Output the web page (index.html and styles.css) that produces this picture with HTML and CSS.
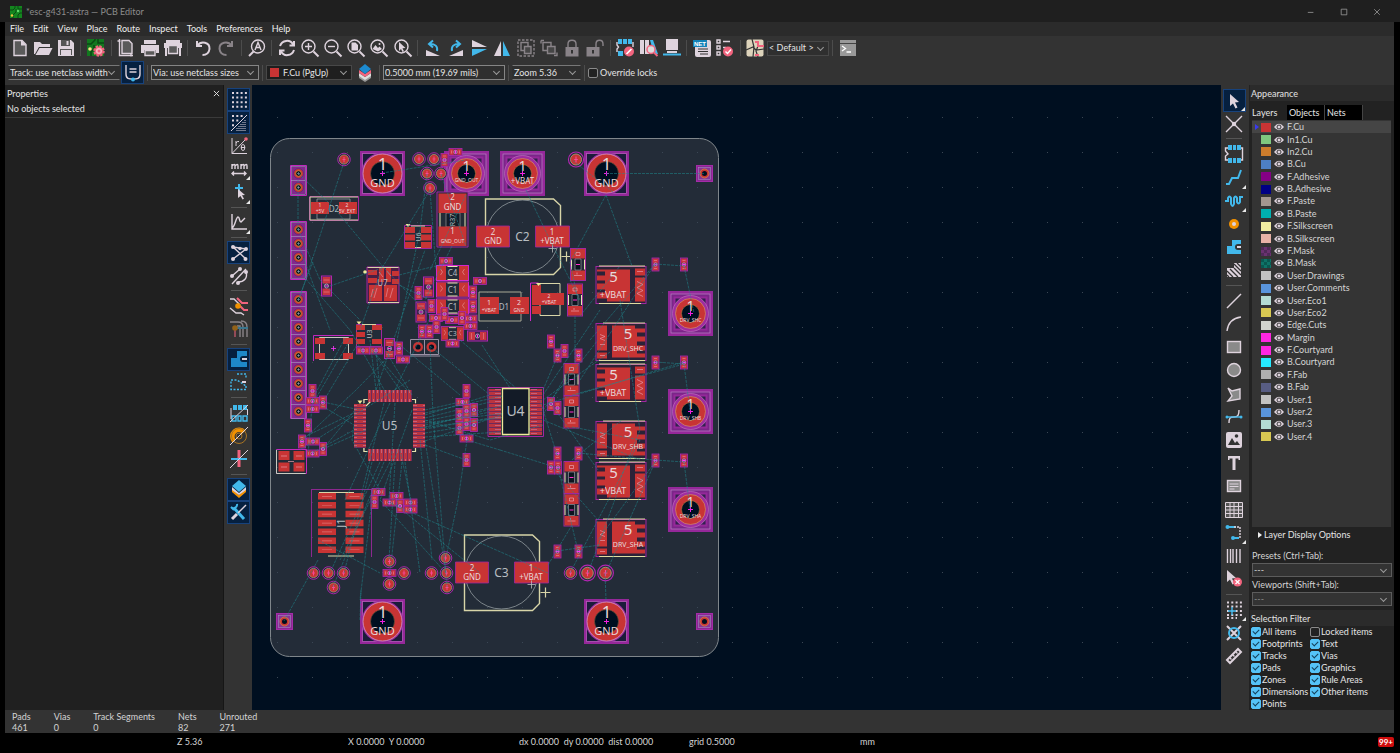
FILE: index.html
```html
<!DOCTYPE html>
<html lang="en">
<head>
<meta charset="utf-8">
<title>*esc-g431-astra — PCB Editor</title>
<link rel="stylesheet" href="styles.css">
</head>
<body>
<header class="titlebar">
  <svg class="app-icon" viewBox="0 0 12 12"><rect width="12" height="12" fill="#14861f"/><path d="M0 4h3l2-2V0M3 12V9l3-3V3M8 0v3h4M8 12V9l2-2h2" fill="none" stroke="#0b4a14"/><circle cx="2" cy="9.500" r="1.200" fill="#f5c542"/><circle cx="8" cy="5" r="1.200" fill="#5fd86a"/></svg>
  <h1>*esc-g431-astra — PCB Editor</h1>
  <div class="win-buttons">
    <button aria-label="Minimize"><svg viewBox="0 0 10 10"><path d="M1 5.500h7"/></svg></button>
    <button aria-label="Maximize"><svg viewBox="0 0 10 10"><path d="M1.500 1.500h7v7h-7z"/></svg></button>
    <button aria-label="Close"><svg viewBox="0 0 10 10"><path d="M1.500 1.500l7 7M8.500 1.500l-7 7"/></svg></button>
  </div>
</header>
<div class="frame">
<nav class="menubar">
  <button>File</button><button>Edit</button><button>View</button><button>Place</button><button>Route</button><button>Inspect</button><button>Tools</button><button>Preferences</button><button>Help</button>
</nav>

<div class="toolbar main-tools">
  <button aria-label="New board"><svg viewBox="0 0 20 20"><path class="fd sl" d="M4 2.500h8l4 4v11H4z"/><path class="fl" d="M11 2l5.500 5.500H11z"/></svg></button>
  <button aria-label="Open"><svg viewBox="0 0 20 20"><path class="fl" d="M1 4h6l2 2h8v3H6l-4 7H1z"/><path class="fl" d="M6.500 10H19.500l-3.500 7H2.500z"/></svg></button>
  <button aria-label="Save"><svg viewBox="0 0 20 20"><path class="fl" d="M2 2h13l3 3v13H2z"/><path d="M5 2h9v6H5zM4 11h12v6H4z" fill="#555"/><path class="fl" d="M10.500 3h2v4h-2zM5 12h10v5H5z"/></svg></button>
  <i class="sep"></i>
  <button aria-label="Board setup"><svg viewBox="0 0 20 20"><rect x="1" y="1" width="17" height="17" fill="#12781f"/><path d="M1 6h4l4-4V1M5 18v-4l3-3V7M12 1v4h6" fill="none" stroke="#0a4814" stroke-width="1.500"/><circle cx="4" cy="11" r="1.800" fill="#f7e08a"/><circle cx="13" cy="13" r="4" fill="none" stroke="#f2647e" stroke-width="3.500" stroke-dasharray="2 1.100"/><circle cx="13" cy="13" r="3.800" fill="#f8b6c2" stroke="#f2647e" stroke-width="1.500"/><circle cx="13" cy="13" r="1.500" fill="#f2647e"/></svg></button>
  <i class="sep"></i>
  <button aria-label="Page settings"><svg viewBox="0 0 20 20"><path class="fd sl" d="M6 2.500h7l3 3v10H6z"/><path class="sl" d="M3.500 1v16.500H17M1.500 3h3M15 16v2.500"/></svg></button>
  <button aria-label="Print"><svg viewBox="0 0 20 20"><path class="fl" d="M4 2h12v4H4zM1 7h18v8h-3v-3H4v3H1z"/><path class="fd sl" d="M5 12.500h10v5H5z"/></svg></button>
  <button aria-label="Plot"><svg viewBox="0 0 20 20"><path class="fl" d="M3 2h14v3H3zM1 5h18v5H1zM2 10h2v8H2zM16 10h2v8h-2z"/><path class="fd sl" d="M5.500 7.500h9v8h-9z"/></svg></button>
  <i class="sep"></i>
  <button aria-label="Undo"><svg viewBox="0 0 20 20"><path class="sl w2" d="M4 3v5h5M4.500 7.500C8 2.500 17 4 16.500 11c-.5 4-3.500 6-7 6"/></svg></button>
  <button class="dim" aria-label="Redo"><svg viewBox="0 0 20 20"><path class="sl w2" d="M16 3v5h-5M15.500 7.500C12 2.500 3 4 3.500 11c.5 4 3.500 6 7 6"/></svg></button>
  <i class="sep"></i>
  <button aria-label="Find"><svg viewBox="0 0 20 20"><circle class="sl" cx="11" cy="8.500" r="6.500"/><path class="sl w2" d="M6.500 13.500L2 18"/><path class="sl" d="M8 12l3-7.500L14 12M9 9.500h4"/></svg></button>
  <i class="sep"></i>
  <button aria-label="Refresh"><svg viewBox="0 0 20 20"><path class="sl w2" d="M3 8c2-6 10-7 13-1.500M17 3v4.500h-4.500M17 12c-2 6-10 7-13 1.500M3 17v-4.500h4.500"/></svg></button>
  <button aria-label="Zoom in"><svg viewBox="0 0 20 20"><circle class="sl" cx="8.500" cy="8.500" r="6.500"/><path class="sl w2" d="M13.500 13.500L18.500 18.500"/><path class="sl" d="M5 8.500h7M8.500 5v7"/></svg></button>
  <button aria-label="Zoom out"><svg viewBox="0 0 20 20"><circle class="sl" cx="8.500" cy="8.500" r="6.500"/><path class="sl w2" d="M13.500 13.500L18.500 18.500"/><path class="sl" d="M5 8.500h7"/></svg></button>
  <button aria-label="Zoom to page"><svg viewBox="0 0 20 20"><circle class="sl" cx="8.500" cy="8.500" r="6.500"/><path class="sl w2" d="M13.500 13.500L18.500 18.500"/><path class="fl" d="M5.500 4.500h4l2.500 2.500v5.500H5.500z"/></svg></button>
  <button aria-label="Zoom to objects"><svg viewBox="0 0 20 20"><circle class="sl" cx="8.500" cy="8.500" r="6.500"/><path class="sl w2" d="M13.500 13.500L18.500 18.500"/><path class="fl" d="M3.500 11l3-4 2.500 3 1.500-1.500 2.500 2.500-4 2.500z"/><circle class="fl" cx="10.500" cy="6" r="1"/></svg></button>
  <button aria-label="Zoom to selection"><svg viewBox="0 0 20 20"><circle class="sl" cx="8.500" cy="8.500" r="6.500"/><path class="sl w2" d="M13.500 13.500L18.500 18.500"/><path class="fl" d="M6 4l6.500 6-3 .3 1.500 3-1.500.7-1.500-3L6 13z"/></svg></button>
  <i class="sep"></i>
  <button aria-label="Rotate counterclockwise"><svg viewBox="0 0 20 20"><path class="fl" d="M3 12l14 6H3z"/><path class="sb w2" d="M14 13c1-5-2-7-7-7M10 2.500L6 6l4 3.500"/></svg></button>
  <button aria-label="Rotate clockwise"><svg viewBox="0 0 20 20"><path class="fl" d="M17 12v6H3z"/><path class="sb w2" d="M6 13c-1-5 2-7 7-7M10 2.500L14 6l-4 3.500"/></svg></button>
  <button aria-label="Flip vertically"><svg viewBox="0 0 20 20"><path class="fl" d="M3 2l15 7H3z"/><path class="fb" d="M3 11h15L3 18z"/></svg></button>
  <button aria-label="Mirror"><svg viewBox="0 0 20 20"><path class="fl" d="M9 3v15H2z"/><path class="fb" d="M11 3v15h7z"/></svg></button>
  <button class="dim" aria-label="Group"><svg viewBox="0 0 20 20"><path class="sl" stroke-dasharray="2.500 1.500" d="M2 2h16v16H2z"/><path class="sl" d="M5 4.500h7v8H5z"/><path class="fd sl" d="M8.500 8.500H15v7H8.500z"/></svg></button>
  <button class="dim" aria-label="Ungroup"><svg viewBox="0 0 20 20"><path class="sl" d="M4 4.500h8v8H4z"/><path class="fd sl" d="M8.500 8.500H16v7H8.500z"/><path class="sl" d="M2 2.500h3M2 2.500v3M15 17.500h3v-3"/></svg></button>
  <button class="dim" aria-label="Lock"><svg viewBox="0 0 20 20"><path class="fl" d="M3.500 9h13v9.500h-13z"/><path class="sl" d="M6 9V6c0-5 8-5 8 0v3"/><path d="M10 12v3.500" stroke="#333" stroke-width="2"/></svg></button>
  <button class="dim" aria-label="Unlock"><svg viewBox="0 0 20 20"><path class="fl" d="M1.500 9h13v9.500h-13z"/><path class="sl" d="M11 9V6c0-5 7-5 7 0v2"/><path d="M8 12v3.500" stroke="#333" stroke-width="2"/></svg></button>
  <i class="sep"></i>
  <button aria-label="Footprint editor"><svg viewBox="0 0 20 20"><path class="sl" d="M2 4v3l1.500 2L2 11v3M18 4v5"/><path class="fb" d="M3 1h4v5H3zM8 1h4v5H8zM13 1h4v5h-4zM3 13h5v5H3z"/><circle class="fr" cx="14" cy="13.500" r="5"/><path d="M11.500 16l5-5" stroke="#fff" stroke-width="1.700"/></svg></button>
  <button aria-label="Footprint browser"><svg viewBox="0 0 20 20"><path class="fl" d="M1 2h4v14H1zM6 2h4v14H6z"/><path class="fb" d="M11 2h3l5 14h-4z"/><circle cx="12" cy="11.500" r="4" fill="#ddd" stroke="#f2647e" stroke-width="1.500"/><path class="sr w2" d="M15 14.500l3.500 3.500"/></svg></button>
  <button aria-label="3D viewer"><svg viewBox="0 0 20 20"><path class="fl" d="M4 1h12v11H4zM5 13h10v2H5z"/><path class="fb" d="M1 15.500h18v2H1z"/></svg></button>
  <i class="sep"></i>
  <button aria-label="Update from schematic"><svg viewBox="0 0 20 20"><rect class="fl" x="3" y="2" width="16" height="17" rx="2"/><path d="M6 11h10M6 13.500h10M8 16h8" stroke="#333" stroke-width="1.200"/><rect x="1" y="2" width="14" height="7" fill="#1382b8"/><text x="2" y="8" class="net">NET</text></svg></button>
  <button aria-label="Design rules check"><svg viewBox="0 0 20 20"><path class="sl" d="M2 2h3v3H2zM2 8h3v3H2zM2 14h3v3H2zM8 3.500h7M8 9.500h3"/><circle class="fr" cx="13" cy="13.500" r="5"/><path d="M10.500 13.500l2 2 3.500-4" stroke="#fff" fill="none" stroke-width="1.400"/></svg></button>
  <i class="sep"></i>
  <button aria-label="Appearance preset"><svg viewBox="0 0 20 20"><rect x="1.500" y="1.500" width="17" height="17" rx="2" fill="#ddd3bb"/><path d="M1 12l7-3 3 3 8-1M7 1l2 8-1 10M13 8l-2 5 2 6" fill="none" stroke="#333" stroke-width="1.200"/><path class="sr w2" d="M10 4h3v4h6M10 17h4"/></svg></button>
  <span class="combo c-default"><select aria-label="Variant"><option>&lt; Default &gt;</option></select></span>
  <i class="sep"></i>
  <button aria-label="Scripting console"><svg viewBox="0 0 20 20"><rect x="2" y="2" width="16" height="16" fill="#999"/><path d="M2 5.500h16" stroke="#444"/><path d="M4 8l3.500 2.500L4 13M8.500 14H13" fill="none" stroke="#fff" stroke-width="1.300"/></svg></button>
</div>

<div class="toolbar options">
  <span class="combo c-track lined"><select aria-label="Track width"><option>Track: use netclass width</option></select></span>
  <button class="on" aria-label="Automatic width"><svg viewBox="0 0 20 20"><path class="sl" d="M3 2v9c0 5 3 5 7 5s7 0 7-5V2M6.500 6h7M6.500 9h7"/><circle class="fb" cx="10" cy="16.500" r="2"/></svg></button>
  <i class="sep"></i>
  <span class="combo c-via boxed"><select aria-label="Via size"><option>Via: use netclass sizes</option></select></span>
  <i class="sep"></i>
  <span class="combo c-layer"><i class="chip"></i><select aria-label="Active layer"><option>F.Cu (PgUp)</option></select></span>
  <button aria-label="Layer pair"><svg viewBox="0 0 20 20"><path fill="#999" d="M4 12l6 4 6-4v3l-6 4-6-4z"/><path fill="#ddd" d="M4 10l6 4 6-4v3l-6 4-6-4z"/><path class="fr" d="M4 7l6 4 6-4v3l-6 4-6-4z"/><path d="M10 1l6 5-6 5-6-5z" fill="#1c8ad0"/></svg></button>
  <i class="sep"></i>
  <span class="combo c-grid boxed"><select aria-label="Grid"><option>0.5000 mm (19.69 mils)</option></select></span>
  <i class="sep"></i>
  <span class="combo c-zoom lined"><select aria-label="Zoom"><option>Zoom 5.36</option></select></span>
  <i class="sep"></i>
  <label class="check"><input type="checkbox">Override locks</label>
</div>

<main class="work">
<aside class="properties">
  <div class="prop-head"><h2>Properties</h2><button aria-label="Close panel"><svg viewBox="0 0 8 8"><path d="M1 1l6 6M7 1L1 7"/></svg></button></div>
  <p>No objects selected</p>
  <div class="prop-grid"></div>
</aside>

<div class="vtools left">
  <button class="on" aria-label="Show grid"><svg viewBox="0 0 20 20"><path class="dots" d="M3 3h15M3 7.600h15M3 12.200h15M3 16.800h15"/></svg></button>
  <button class="on" aria-label="Grid overrides"><svg viewBox="0 0 20 20"><path class="dots" d="M3 3h11M3 7.600h7M3 12.200h4"/><path class="sl thin" d="M2 18L18 2"/><path d="M16 7v11M14 9v9M12 11v7M10 13v5M8 15v3" stroke="#ded3dd" stroke-dasharray="1 1"/></svg></button>
  <button aria-label="Polar coordinates"><svg viewBox="0 0 20 20"><path class="sl thin" d="M3 2v15.500h15M3 17.500L16 4M7 5v5M7 7q1-2 3-1.500"/><ellipse class="sl thin" cx="14" cy="11.500" rx="1.800" ry="3"/><path class="sl thin" d="M12 11.500h4"/><circle class="fr" cx="17" cy="3" r="1.800"/></svg></button>
  <button class="more" aria-label="Units: millimeters"><svg viewBox="0 0 20 20"><path class="sl" d="M3 10V5M3 7q3-3 3 0v3M6 7q3-3 3 0v3M12 10V5M12 7q3-3 3 0v3M15 7q3-3 3 0v3M3 14.500h14M5 12.500l-2 2 2 2M15 12.500l2 2-2 2"/></svg></button>
  <button class="more" aria-label="Crosshair style"><svg viewBox="0 0 20 20"><path class="sb w2" d="M10 2v8M6 6h8"/><path class="fl" d="M9 7l7 6-3 .3 2 3.500-1.500.7-2-3.500L9 16z"/></svg></button>
  <i class="sep"></i>
  <button class="more" aria-label="Line mode"><svg viewBox="0 0 20 20"><path class="sl" d="M3 2v15h15M3 16c3-1 4-11 6-11s1 5 3 5l4-4"/></svg></button>
  <i class="sep"></i>
  <button class="on" aria-label="Show ratsnest"><svg viewBox="0 0 20 20"><path class="sl" d="M4 4l13 12M4 16L17 6M4 4l13 2"/><g class="fl"><circle cx="4" cy="4" r="2"/><circle cx="11" cy="5.500" r="1.800"/><circle cx="17" cy="6" r="2"/><circle cx="4" cy="16" r="2"/><circle cx="16.500" cy="16" r="2"/></g></svg></button>
  <button aria-label="Curved ratsnest"><svg viewBox="0 0 20 20"><path class="sl" d="M3 10L11 3M3 18L17 3M17 6c2 6-2 10-8 10"/><g class="fl"><circle cx="3" cy="10" r="2"/><circle cx="11" cy="3" r="2"/><circle cx="17" cy="6" r="2"/><circle cx="9" cy="17" r="2"/></g></svg></button>
  <i class="sep"></i>
  <button aria-label="Net colors"><svg viewBox="0 0 20 20"><path class="sl" d="M1 3h4l6 6M1 12l6 5h5l3 2"/><path class="sr w2" d="M8 2l5 5h6M11 10l4 4h4"/><circle class="fo" cx="9" cy="10" r="2.800"/></svg></button>
  <button class="dim" aria-label="High contrast nets"><svg viewBox="0 0 20 20"><path class="sl" d="M1 3h8q5 0 5 5v10M8 7h3v11M12 2q6 0 6 6v10"/><path class="sb w2" d="M8 9h11"/><path class="sr w2" d="M6 9v9"/><circle class="fo" cx="6" cy="9" r="2.800"/></svg></button>
  <i class="sep"></i>
  <button class="on" aria-label="Filled zones"><svg viewBox="0 0 20 20"><path d="M8 2h10v5h-4a3 3 0 000 6h4v5H2V9h6z" fill="#1e88c9"/><path class="sl w2" d="M13 10h5"/></svg></button>
  <button aria-label="Zone outlines"><svg viewBox="0 0 20 20"><path class="sb" stroke-dasharray="2 1.500" d="M8 2h9v4M17 14v3.500H2V8h6z"/><path class="sl w2" d="M13 10h4"/></svg></button>
  <i class="sep"></i>
  <button aria-label="Sketch footprints"><svg viewBox="0 0 20 20"><path class="fb" d="M4 2h4v5H4zM9 2h4v5H9zM14 2h4v5h-4z"/><path class="sb" d="M3 13h4v5H3zM9 13h3v5H9zM14 13h4v5h-4z"/><path class="sl thin" d="M2 5v11M18.500 6v6M1 19L19 2"/></svg></button>
  <button aria-label="Sketch vias"><svg viewBox="0 0 20 20"><path fill="none" stroke="#f29100" stroke-width="4.500" d="M15 6A6 6 0 005 15"/><circle cx="10" cy="10" r="7.500" fill="none" stroke="#a97423"/><circle cx="10" cy="10" r="3" fill="none" stroke="#a97423"/><path class="sl thin" d="M1 19L19 1"/></svg></button>
  <button aria-label="Sketch tracks"><svg viewBox="0 0 20 20"><path class="sr w3" d="M10 1v17"/><path class="sb w2" d="M2 10h16"/><path class="sl thin" d="M1 19L19 1"/></svg></button>
  <i class="sep"></i>
  <button class="on" aria-label="Layers manager"><svg viewBox="0 0 20 20"><path class="fo" d="M3 10l7 6 7-6v3l-7 6-7-6z"/><path class="fl" d="M3 8l7 6 7-6v3l-7 5-7-5z"/><path class="fb" d="M10 1l7 6-7 6-7-6z"/></svg></button>
  <button class="on" aria-label="Properties manager"><svg viewBox="0 0 20 20"><path d="M5 6l10 11" stroke="#42b8eb" stroke-width="3"/><path class="sb w2" d="M2 5a3.500 3.500 0 006-3M2 5l3 3"/><path class="sl" d="M17 3L9 11"/><path d="M8 12l-5 5" stroke="#ded3dd" stroke-width="3"/></svg></button>
</div>

<section class="canvas" aria-label="Board canvas">
<svg viewBox="252 85 969 625" preserveAspectRatio="xMidYMid slice">
<defs>
  <pattern id="grid" x="505" y="100" width="35" height="35" patternUnits="userSpaceOnUse"><rect x="17" y="17" width="1" height="1" fill="#3a4654"/></pattern>
  <pattern id="pinx" x="368" width="4" height="12" patternUnits="userSpaceOnUse"><rect width="4" height="12" fill="#6c2a5c"/><rect width="3" height="12" fill="#bb343f"/><rect x="1" y="3" width="1" height="6" fill="#c8607a"/></pattern>
  <pattern id="piny" y="404" width="12" height="4" patternUnits="userSpaceOnUse"><rect width="12" height="4" fill="#6c2a5c"/><rect width="12" height="3" fill="#bb343f"/><rect x="3" y="1" width="6" height="1" fill="#c8607a"/></pattern>
  <g id="big"><rect x="-21" y="-21" width="42" height="42" fill="#1b1c3a" stroke="#95289a" stroke-width="3"/><rect x="-20" y="-20" width="40" height="40" fill="none" stroke="#b06ab8" stroke-width=".6"/><circle r="21" fill="#95289a"/><circle r="19.500" fill="#c83434" stroke="#d79ac9" stroke-width=".8"/><circle r="12" fill="#000f20" stroke="#7a5a3a" stroke-width=".6"/><path d="M-2.500 0h5M0-2.500v5" stroke="#f020e0"/></g>
  <g id="mid"><rect x="-21" y="-21" width="42" height="42" fill="#7b2589" stroke="#95289a" stroke-width="3"/><rect x="-19.500" y="-19.500" width="39" height="39" fill="none" stroke="#b684c4" stroke-width=".7"/><rect x="-16" y="-16" width="32" height="32" fill="#33204f" stroke="#95289a" stroke-width="2"/><circle r="18" fill="#a02da0" stroke="#c27ac6" stroke-width=".6"/><circle r="15" fill="#c83434" stroke="#d79a6a" stroke-width=".6"/><circle r="9" fill="#000f20" stroke="#a87a3a" stroke-width=".6"/><path d="M-2.500 0h5M0-2.500v5" stroke="#f020e0"/></g>
  <g id="sq"><rect x="-8" y="-8" width="16" height="16" fill="#8a2892" stroke="#a32ca8"/><rect x="-6" y="-6" width="12" height="12" fill="#8a3496" stroke="#a08ac0" stroke-width=".6"/><circle r="4.500" fill="#c83434" stroke="#d8a03a" stroke-width=".6"/><circle r="2.500" fill="#000f20"/></g>
  <g id="hp"><rect x="-7" y="-7" width="14" height="14" fill="#84288d" stroke="#a98bc0" stroke-width=".6"/><circle r="5" fill="#c83434" stroke="#5f2b80"/><circle r="2.800" fill="#000f20" stroke="#e09a3a" stroke-width=".8"/><path d="M-1.500 0h3M0-1.500v3" stroke="#b8b8c8" stroke-width=".5"/></g>
  <g id="tp"><circle r="6.300" fill="#232c38" stroke="#b326b4" stroke-width=".9"/><circle r="4.600" fill="#c83434" stroke="#a89a80" stroke-width=".7"/><path d="M-1.500 0h3M0-2.500v5" stroke="#f64a9a" stroke-width=".9"/></g>
  <g id="v"><rect x="-3.500" y="-6.500" width="7" height="13" fill="#7a2462" stroke="#b027ae" stroke-width=".8"/><path d="M-2.800-5.800h5.600v4h-5.600zM-2.800 1.800h5.600v4h-5.600z" fill="#cc3440"/><path d="M-1.500-4h3M-1.500 4h3" stroke="#e78a9c" stroke-width=".6"/><circle r="1.700" fill="#6a2468" stroke="#d9a8c8" stroke-width=".7"/><path d="M-1.500 0h3" stroke="#f3f"/></g>
  <g id="h"><use href="#v" transform="rotate(90)"/></g>
  <g id="V"><rect x="-5" y="-10" width="10" height="20" fill="#3e2050" stroke="#b027ae"/><path d="M-4-9h8v6.500h-8zM-4 2.500h8V9h-8z" fill="#c83440"/><path d="M-3-6h6M-3 6h6" stroke="#e99" stroke-width=".5"/><circle r="2" fill="none" stroke="#ccc" stroke-width=".7"/><path d="M-1.500 0h3" stroke="#f3f"/></g>
  <g id="res"><rect x="-7.500" y="-16" width="15" height="32" fill="#232c38" stroke="#a027a0"/><path d="M-6.500-5v10M6.500-5v10" stroke="#e8e4b0"/><path d="M-7-15.500H7v9.500H-7zM-7 6H7v9.500H-7z" fill="#c83434"/><path d="M-3-5.500h6v11h-6z" fill="#0c1420" stroke="#a8a8b0" stroke-width=".6"/><path d="M-2 0h4" stroke="#f3c"/><path d="M-2-12h4v3h-4zM-4 11h8M-1 8v2" fill="none" stroke="#e9a0b0" stroke-width=".7"/></g>
  <g id="cap"><rect x="-16" y="-7.500" width="32" height="15" fill="#232c38" stroke="#d127cc"/><path d="M-15.500-7h9V7h-9zM6.500-7h9V7h-9z" fill="#c83434"/><path d="M-5-6.500h10M-5 6.500h10" stroke="#e8e4b0"/><path d="M-12-4l2 3-2 3M12-4l-2 3 2 3" stroke="#e7a0a0" stroke-width=".6" fill="none"/></g>
  <g id="fetv"><rect x="0" y="1" width="50" height="37" fill="#2b2238" stroke="#a027a0"/><path d="M3 .5h46M3 38h42" stroke="#e0dca0" stroke-width="1.200"/><path d="M11 4h23v32H11v-3H1v-6h8v-3H1v-6h8v-3H1v-5h8V6H1V4z" fill="#c83434"/><path d="M39 3h10v7H39zM39 12h10v24H39z" fill="#c83434"/><path d="M41 6h6M41 16l6 3-6 3 6 3-6 3 6 3" stroke="#e79aa8" stroke-width=".7" fill="none"/></g>
  <g id="fets"><rect x="0" y="1" width="50" height="37" fill="#2b2238" stroke="#a027a0"/><path d="M7 .5h42M3 38h46" stroke="#e0dca0" stroke-width="1.200"/><path d="M16 3h23v3h10v4h-8v4h8v5h-8v4h8v5h-8v3h8v4H16z" fill="#c83434"/><path d="M1 3h10v25H1zM1 30h10v6H1z" fill="#c83434"/><path d="M4 12l5 2-5 2 5 2M4 22h5M4 33h5" stroke="#e79aa8" stroke-width=".7" fill="none"/></g>
  <g id="elco"><path d="M-37-37.500H31L38-31V31L31 38H-37z" fill="none" stroke="#d8d5a8" stroke-width="1.400"/><circle r="36.500" fill="none" stroke="#929a9e" stroke-width=".8"/><path d="M-46-10.500h33v21h-33zM13-10.500h34v21H13z" fill="#c83434" stroke="#a027a0" stroke-width=".8"/><path d="M39 20h10M44 15v10" stroke="#d8d5a8" stroke-width="1.200"/><path d="M26 12h8M30 8v8" stroke="#bbb" stroke-width=".8"/></g>
</defs>
<rect x="-1000" y="-1000" width="3500" height="3500" fill="#000f20"/>
<rect x="270.500" y="138.500" width="448" height="518" rx="19" fill="#232c38" stroke="#7f868b"/>
<rect x="-1000" y="-1000" width="3500" height="3500" fill="url(#grid)"/>

<use href="#big" x="382.500" y="173.500"/><use href="#big" x="606.500" y="173.500"/><use href="#big" x="382.500" y="621.500"/><use href="#big" x="606.500" y="621.500"/>
<use href="#mid" x="466.500" y="173.500"/><use href="#mid" x="522.500" y="173.500"/><use href="#mid" x="690.500" y="313.500"/><use href="#mid" x="690.500" y="411.500"/><use href="#mid" x="690.500" y="509.500"/>
<use href="#sq" x="704.500" y="173.500"/><use href="#sq" x="704.500" y="621.500"/><use href="#sq" x="284.500" y="621.500"/>

<g fill="none" stroke="#c028bd"><path d="M290.500 165.500h16v30h-16zM290.500 221.500h16v58h-16zM290.500 291.500h16v127h-16z"/></g>
<use href="#hp" x="298.500" y="173.500"/><use href="#hp" x="298.500" y="187.500"/>
<use href="#hp" x="298.500" y="229.500"/><use href="#hp" x="298.500" y="243.500"/><use href="#hp" x="298.500" y="257.500"/><use href="#hp" x="298.500" y="271.500"/>
<use href="#hp" x="298.500" y="299.500"/><use href="#hp" x="298.500" y="313.500"/><use href="#hp" x="298.500" y="327.500"/><use href="#hp" x="298.500" y="341.500"/><use href="#hp" x="298.500" y="355.500"/><use href="#hp" x="298.500" y="369.500"/><use href="#hp" x="298.500" y="383.500"/><use href="#hp" x="298.500" y="397.500"/><use href="#hp" x="298.500" y="411.500"/>

<use href="#tp" x="344" y="159.500"/><use href="#tp" x="419" y="159"/><use href="#tp" x="434" y="159"/><use href="#tp" x="427" y="173.500"/><use href="#tp" x="441" y="173.500"/><use href="#tp" x="430" y="188"/>
<use href="#tp" transform="translate(576 159.500) scale(1.200)"/>
<use href="#tp" x="313.500" y="573"/><use href="#tp" x="328.500" y="573"/><use href="#tp" x="343.500" y="573"/><use href="#tp" x="333.500" y="587.500"/><use href="#tp" x="389.500" y="561.500"/><use href="#tp" x="404" y="573"/><use href="#tp" x="389.500" y="584"/><use href="#tp" x="431.500" y="573"/><use href="#tp" x="446.500" y="573"/><use href="#tp" x="445.500" y="558"/><use href="#tp" x="447" y="587.500"/><use href="#tp" x="570.500" y="573"/>
<use href="#tp" transform="translate(587.500 573) scale(1.250)"/><use href="#tp" transform="translate(605.500 573) scale(1.250)"/>

<!-- D2 -->
<path d="M309.500 196.500h49v24h-49z" fill="none" stroke="#a027a0"/><path d="M358 197h-48v23h48" fill="none" stroke="#d8d5a8"/><path d="M317 199h33v20h-33z" fill="none" stroke="#a9adb0" stroke-width=".7"/><path d="M311 202h18v12h-18zM339 202h18v12h-18z" fill="#c83434"/><text x="334" y="212" class="p8 ref">D2</text>
<!-- R37 -->
<path d="M437 192h31v55h-31z" fill="#232c38" stroke="#a027a0"/><path d="M440 213v14M465 213v14" stroke="#e8e4b0"/><path d="M446 213h14v14h-14z" fill="#141c28" stroke="#aaa" stroke-width=".6"/><path d="M438.500 193.500h28v19.500h-28zM438.500 226.500h28V246h-28z" fill="#c83434"/>
<text transform="translate(455 220) rotate(-90)" class="p7 ref">R37</text>
<!-- U6 -->
<path d="M404.500 225.500h27v23h-27z" fill="none" stroke="#a027a0"/><path d="M411 247.500h14M411 226h14" stroke="#d8d5a8"/><path d="M405 227h10v6h-10zM405 234.500h10v6h-10zM405 242h10v6h-10zM421 227h10v6h-10zM421 234.500h10v6h-10zM421 242h10v6h-10z" fill="#c83434"/><text transform="translate(421 237) rotate(-90)" class="p7 ref">U6</text><path d="M405.500 224l2.500 3 2.500-3z" fill="#f0ec9a"/>

<use href="#elco" x="522.500" y="236.500"/><use href="#elco" x="501.500" y="572.500"/>
<use href="#res" x="578" y="264.500"/><use href="#res" x="575" y="300"/><use href="#res" x="571.500" y="379.500"/><use href="#res" x="571.500" y="412"/><use href="#res" x="571.500" y="477.500"/><use href="#res" x="571.500" y="510"/>

<use href="#fetv" x="596" y="265.500"/><use href="#fetv" x="596" y="363.500"/><use href="#fetv" x="596" y="461.500"/>
<use href="#fets" x="596" y="322.500"/><use href="#fets" x="596" y="420.500"/><use href="#fets" x="596" y="518.500"/>

<!-- D1 and regulator -->
<path d="M479 292h42v29h-42z" fill="none" stroke="#a9a894"/><path d="M530.500 283v38M530.500 283h8" stroke="#d127cc" fill="none"/><path d="M480 297h19v17h-19zM510 297h19v17h-19z" fill="#c83434"/><text x="504" y="310" class="p8 ref">D1</text>
<path d="M540 283.500h20v32h-20z" fill="none" stroke="#d8d5a8"/><path d="M532 285h9v8h-9zM532 306h9v8h-9zM532 293h32v12h-32z" fill="#c83434"/><path d="M536 283l2.500 3 2.500-3z" fill="#f0ec9a"/>

<!-- U7 -->
<path d="M367 267h32v36h-32z" fill="#4a1f45" stroke="#a027a0"/><path d="M368 302.500h31M367.500 267.500h31" stroke="#d8d5a8"/><path d="M368 270h9v5h-9zM368 278h9v5h-9zM379 268h5v14h-5zM386 268h5v14h-5zM392 271h7v5h-7zM392 279h7v5h-7zM369 285h13v16h-13zM384 285h13v16h-13z" fill="#c83434"/><path d="M373 289l-2 8M377 288l-3 10M388 288l-2 9M393 288l-3 10M379 272l4 5M387 271l4 5" stroke="#e79aa8" stroke-width=".6"/><text x="382.500" y="286" class="p8 ref">U7</text><circle cx="365" cy="272" r="1.800" fill="#f0ec9a"/>
<use href="#V" x="326.500" y="286"/>

<!-- cluster between the regulator and U7 -->
<use href="#cap" x="452.500" y="273"/><use href="#cap" x="452.500" y="289.500"/><use href="#cap" x="452.500" y="306.500"/><use href="#cap" transform="translate(452.500 333.500) scale(.7 .9)"/><text x="452.500" y="276" class="p8 ref">C4</text><text x="452.500" y="293" class="p8 ref">C1</text><text x="452.500" y="310" class="p8 ref">C1</text><text x="452.500" y="336" class="p7 ref">C3</text>
<use href="#h" x="446" y="261"/><use href="#h" x="480" y="281"/><use href="#V" x="428.500" y="287"/><use href="#v" x="418.500" y="293"/><use href="#v" x="431.500" y="306"/><use href="#v" x="473" y="292.500"/><use href="#v" x="473" y="306.500"/><use href="#V" x="421" y="312"/><use href="#h" x="436" y="318"/><use href="#v" x="422" y="331.500"/><use href="#v" x="429.500" y="331.500"/><use href="#v" x="436.500" y="327"/><use href="#h" x="452" y="320"/><use href="#h" x="452.500" y="343.500"/><use href="#h" x="470.500" y="318.500"/><use href="#h" x="470.500" y="326"/><use href="#V" transform="translate(477.500 336) rotate(90)"/><use href="#v" x="444.500" y="314"/><use href="#v" x="462" y="318"/>
<use href="#h" x="455.500" y="152"/><use href="#v" x="444.500" y="160"/>
<use href="#V" x="389.500" y="348.500"/><use href="#v" x="399" y="348.500"/><use href="#h" x="403" y="359.500"/><use href="#h" x="363" y="350.500"/><use href="#h" x="376" y="350.500"/>
<!-- U3 -->
<path d="M356.500 324.500h25v22h-25z" fill="none" stroke="#a027a0"/><path d="M362 324.500h14" stroke="#d8d5a8"/><path d="M356 325h9v5h-9zM356 332h9v5h-9zM356 339h9v5h-9zM372 325h10v5h-10zM372 339h10v5h-10z" fill="#c83434"/><text transform="translate(372 334) rotate(-90)" class="p7 ref">U3</text><path d="M356.500 321.500l2.500 3 2.500-3z" fill="#f0ec9a"/>
<!-- crystal -->
<path d="M313.500 361v-25.500h40" fill="none" stroke="#c028bd"/><path d="M319.500 337.500h29v22h-29z" fill="none" stroke="#c9cac0"/><path d="M315 338h10v6h-10zM343 338h10v6h-10zM315 353h10v6h-10zM343 353h10v6h-10z" fill="#c83434"/><path d="M331 348.500h5M333.500 346v5" stroke="#f3f" stroke-width=".8"/>
<!-- jumper -->
<path d="M410.500 339.500h28v15h-28zM424.500 339.500v15M410 356h30" fill="none" stroke="#9a8fa4"/><circle cx="418" cy="347" r="5" fill="#c83434"/><circle cx="431.500" cy="347" r="5" fill="#c83434"/><circle cx="418" cy="347" r="2.600" fill="#000f20"/><circle cx="431.500" cy="347" r="2.600" fill="#000f20"/>

<!-- U5 -->
<path d="M363.500 399.500h52v52h-52z" fill="#232c38" stroke="#8a8d90" stroke-width=".6"/><path d="M364 403v-3.500h3.500M412 399.500h3.500v3.500M364 448v3.500h3.500M412 451.500h3.500v-3.500M366 406l6-6" fill="none" stroke="#e8e4b0" stroke-width="1.200"/>
<path d="M368 390h44v12h-44zM368 449h44v12h-44z" fill="url(#pinx)"/><path d="M354 404h12v44h-12zM413 404h12v44h-12z" fill="url(#piny)"/><path d="M357.500 400.500l2.500 3.500 2.500-3.500z" fill="#f0ec9a"/>
<!-- U4 -->
<path d="M488 387.500h55.500v49H488z" fill="none" stroke="#a027a0"/><path d="M489 389h12v46h-12zM530 389h12v46h-12z" fill="url(#piny)"/>

<use href="#v" x="466.500" y="391"/><use href="#h" x="462.500" y="402"/><use href="#v" x="459.500" y="415"/><use href="#v" x="459.500" y="428"/><use href="#v" x="466.500" y="411"/><use href="#v" x="466.500" y="424"/><use href="#v" x="474" y="410"/><use href="#v" x="474" y="425"/><use href="#h" x="466.500" y="438.500"/><use href="#v" x="466.500" y="460"/>
<use href="#v" x="312.500" y="391"/><use href="#h" x="312.500" y="401"/><use href="#h" x="312.500" y="409"/><use href="#v" x="323" y="402.500"/><use href="#v" x="308" y="425.500"/><use href="#v" x="302" y="441.500"/><use href="#h" x="313" y="441.500"/><use href="#v" x="323" y="449"/><use href="#h" x="312.500" y="453.500"/>
<path d="M276.500 449.500h30v24h-30z" fill="none" stroke="#c028bd"/><path d="M276.500 450v23.500h29" fill="none" stroke="#c9cac0"/><path d="M278.500 451h11v9h-11zM293.500 451h11v9h-11zM278.500 462.500h11v9h-11zM293.500 462.500h11v9h-11z" fill="#c83434"/><path d="M281 456h6M296 456h6M281 467h6M296 467h6M288 461.500h6" stroke="#e79aa8" stroke-width=".7"/>

<use href="#v" x="655.500" y="264.500"/><use href="#v" x="684" y="264.500"/><use href="#v" x="655.500" y="362.500"/><use href="#v" x="684" y="362.500"/><use href="#v" x="655.500" y="460.500"/><use href="#v" x="684" y="460.500"/><use href="#v" x="557.500" y="551.500"/><use href="#v" x="578.500" y="551.500"/>
<use href="#v" x="551" y="341.500"/><use href="#v" x="564.500" y="351"/><use href="#v" x="557.500" y="355.500"/><use href="#v" x="578.500" y="355.500"/><use href="#v" x="551" y="404"/><use href="#v" x="557.500" y="408"/><use href="#v" x="557.500" y="453.500"/><use href="#v" x="578.500" y="453.500"/><use href="#v" x="551" y="467.500"/><use href="#v" x="558" y="467.500"/>

<!-- J1 -->
<path d="M311 489.500h61M311.500 490v67M371.500 490v67" fill="none" stroke="#8c288f"/><path d="M319 492.500h35M328 556h26" stroke="#d8d5a8" stroke-width="1.200"/>
<path d="M327 493v61M354.500 493v61" stroke="#c83434" stroke-width="18" stroke-dasharray="6.500 2.400"/><path d="M327 496v56M354.500 496v56" stroke="#e9a0a0" stroke-width="10" stroke-dasharray=".7 8.200" opacity=".6"/>
<text transform="translate(344.500 523) rotate(-90)" class="p10 ref">J1</text>
<use href="#h" x="378.500" y="492"/><use href="#v" x="374.500" y="502"/><use href="#h" x="396.500" y="496"/><use href="#h" x="389.500" y="502.500"/><use href="#v" x="400" y="506"/><use href="#h" x="410.500" y="502.500"/><use href="#h" x="410.500" y="509.500"/><use href="#h" x="389.500" y="573"/>

<!-- ratsnest -->
<g class="rats"><path d="M606 173.500H704M606 195L570 262M606 195L632 266M613 192L572 160M570 262L578 300M526 190L548 236L580 300M382 173L466 160M344 162L299 300M298 173L334 208L384 268L432 318M298 180V230M298 243L330 330M298 229L320 280L360 320M330 286L382 268M430 190L382 268L360 330M430 190L436 270M466 195L430 270M441 174L466 246M452 246L425 300M427 174L420 230L396 345M399 275L452 262M399 285L430 300M298 270L350 330L390 400M298 300L313 262M345 338L312 400M350 340L312 405L308 455M357 345L323 402M323 402L360 410M312 400L354 425M323 449L355 410M302 441L356 390L400 345M312 453L354 430M300 450L410 380M390 462L340 560M384 462L333 587M380 462L330 573M372 462L344 573M395 462L389 560M402 462L390 573M376 390L370 340M380 390L376 350M400 390L372 350M407 390L372 350M395 390L430 318M412 395L385 350M376 390L425 250M425 410L460 402M425 415L490 395M425 418L490 402M425 421L490 408M425 425L490 412M425 429L490 418M425 433L474 425M425 437L530 430M425 441L530 405M400 345L460 395M430 346L433 415L447 587M430 346L490 395M460 340L530 400M425 445L466 460M467 440L458 500L446 558M467 440L500 450M482 345L510 388M420 440L432 560M425 440L446 573M388 502L548 573M396 505L480 573M380 500L446 573M372 500L360 600M318 560L284 621M318 540L380 573M360 620L361 590M380 490L352 440L354 425M543 395L600 310M543 400L610 352M543 405L684 362M543 410L598 340M543 415L572 365M500 450L555 467M543 420L640 460M543 390L562 345M557 455L540 400M551 404L598 470M575 316V365M580 316L620 266M590 340L655 264M655 264L684 266M655 264L580 380M655 362L684 364M684 266L694 313M684 364L690 411M684 462L690 509M655 460L684 462M655 462L598 540M572 395L684 364M572 427L640 440M572 460L622 420M620 300L640 430L620 480M578 453L655 460M551 467L598 520M558 467L578 551M557 551L600 545M570 573L640 440M588 573L622 480M606 573L655 462M606 600L605 573M543 425L490 440L425 420M425 413L530 390M425 423L530 410M425 427L530 398M356 412L298 440M366 430L323 449M390 403L345 500M395 403L389 500M384 403L360 500M412 410L380 500M420 428L530 414M400 450L412 505M405 462L420 573M548 565L572 525"/></g>
<path d="M502.500 388.500h26.500v46h-26.500z" fill="#131b27" stroke="#f0ec9a" stroke-width="1.300"/>

<!-- pad names and references -->
<g class="pt">
<text x="382.500" y="170" class="p17">1</text><text x="382.500" y="187" class="p10">GND</text><text x="606.500" y="170" class="p17">1</text><text x="606.500" y="187" class="p10">GND</text><text x="382.500" y="618" class="p17">1</text><text x="382.500" y="635" class="p10">GND</text><text x="606.500" y="618" class="p17">1</text><text x="606.500" y="635" class="p10">GND</text>
<text x="466.500" y="171" class="p14">1</text><text x="466.500" y="182" class="p6">GND_OUT</text><text x="522.500" y="171" class="p14">1</text><text x="522.500" y="184" class="p8">+VBAT</text>
<text x="690.500" y="311" class="p14">1</text><text x="690.500" y="322" class="p6">DRV_SHC</text><text x="690.500" y="409" class="p14">1</text><text x="690.500" y="420" class="p6">DRV_SHB</text><text x="690.500" y="507" class="p14">1</text><text x="690.500" y="518" class="p6">DRV_SHA</text>
<text x="320" y="207" class="p6">1</text><text x="320" y="213" class="p6">+5V</text><text x="347" y="207" class="p6">2</text><text x="347" y="213" class="p6">5V_EXT</text>
<text x="452.500" y="200" class="p8">2</text><text x="452.500" y="210" class="p8">GND</text><text x="452.500" y="234" class="p8">1</text><text x="452.500" y="243" class="p6">GND_OUT</text>
<text x="493" y="235" class="p8">2</text><text x="493" y="244" class="p8">GND</text><text x="552" y="235" class="p8">1</text><text x="552" y="244" class="p8">+VBAT</text><text x="522.500" y="241" class="p12 ref">C2</text>
<text x="472" y="571" class="p8">2</text><text x="472" y="580" class="p8">GND</text><text x="531" y="571" class="p8">1</text><text x="531" y="580" class="p8">+VBAT</text><text x="501.500" y="577" class="p12 ref">C3</text>
<text x="489" y="305" class="p7">1</text><text x="489" y="312" class="p6">+VBAT</text><text x="519" y="305" class="p7">2</text><text x="519" y="312" class="p6">GND</text><text x="549" y="298" class="p6">2</text><text x="549" y="304" class="p6">+VBAT</text>
<text x="613.500" y="282" class="p15">5</text><text x="613" y="298" class="p9">+VBAT</text><text x="613.500" y="380" class="p15">5</text><text x="613" y="396" class="p9">+VBAT</text><text x="613.500" y="478" class="p15">5</text><text x="613" y="494" class="p9">+VBAT</text>
<text x="628" y="339" class="p15">5</text><text x="628" y="351" class="p7">DRV_SHC</text><text x="628" y="437" class="p15">5</text><text x="628" y="449" class="p7">DRV_SHB</text><text x="628" y="535" class="p15">5</text><text x="628" y="547" class="p7">DRV_SHA</text>
<text x="389.500" y="430" class="p12 ref">U5</text><text x="515.500" y="416" class="p14 ref">U4</text>
</g>
</svg>
</section>

<div class="vtools right">
  <button class="on more" aria-label="Select"><svg viewBox="0 0 20 20"><path class="fl" d="M6 3l9 8-4 .4 2.500 5-2 1-2.500-5L6 15z"/></svg></button>
  <button aria-label="Local ratsnest"><svg viewBox="0 0 20 20"><path class="sl" d="M2 2l16 16M18 2L2 18"/><circle class="fl" cx="10" cy="10" r="2.200"/></svg></button>
  <i class="sep"></i>
  <button aria-label="Place footprint"><svg viewBox="0 0 20 20"><path class="sl" d="M4 4H1.500v3L4 10l-2.500 2v4H4M16 4h2.500v12H16"/><path class="fb" d="M4 1h4v5H4zM9 1h3v5H9zM13 1h4v5h-4zM4 14h4v5H4zM9 14h3v5H9zM13 14h4v5h-4z"/></svg></button>
  <button class="more" aria-label="Route track"><svg viewBox="0 0 20 20"><path class="sb w2" d="M2 17h3l3-6h6l3-8"/></svg></button>
  <button class="more" aria-label="Tune length"><svg viewBox="0 0 20 20"><path class="sb w2" d="M1 10h3V7q1.500-3 3 0v6q1.500 4 3 0V7q1.500-3 3 0v4q1.500 3 3 0V6h3"/></svg></button>
  <button aria-label="Place via"><svg viewBox="0 0 20 20"><circle class="fo" cx="10" cy="10" r="5"/><circle class="fl" cx="10" cy="10" r="2"/></svg></button>
  <button aria-label="Draw zone"><svg viewBox="0 0 20 20"><path class="fb" d="M8 3h9v4h-3a3 3 0 000 6h3v4H3V9h5z"/><path class="sl w2" d="M13 10h4"/></svg></button>
  <button aria-label="Rule area"><svg viewBox="0 0 20 20"><path class="fl" d="M10 3h7v14H3V8h7z"/><path d="M3 11l6 6M3 15l2 2M6 9l8 8M10 8l7 7M10 4l7 7M13 3l4 4" stroke="#333" stroke-width="1.300"/></svg></button>
  <i class="sep"></i>
  <button aria-label="Line"><svg viewBox="0 0 20 20"><path class="sl" d="M3 17L17 3"/></svg></button>
  <button aria-label="Arc"><svg viewBox="0 0 20 20"><path class="sl" d="M3 17C4 9 9 4 17 3"/></svg></button>
  <button aria-label="Rectangle"><svg viewBox="0 0 20 20"><rect x="3.500" y="4.500" width="13" height="11" fill="#8a8a8a" stroke="#ded3dd" stroke-width="1.400"/></svg></button>
  <button aria-label="Circle"><svg viewBox="0 0 20 20"><circle cx="10" cy="10" r="6.500" fill="#8a8a8a" stroke="#ded3dd" stroke-width="1.400"/></svg></button>
  <button aria-label="Polygon"><svg viewBox="0 0 20 20"><path d="M4 4l4 3 8-2v10L4 17l4-5z" fill="#8a8a8a" stroke="#ded3dd" stroke-width="1.400"/></svg></button>
  <button aria-label="Bezier"><svg viewBox="0 0 20 20"><path class="sl" d="M5 16c0-5 1-6 5-6s5-2 5-7"/><path class="sb" d="M3 10h14"/><g class="fb"><circle cx="3" cy="10" r="1.500"/><circle cx="17" cy="10" r="1.500"/></g></svg></button>
  <button aria-label="Image"><svg viewBox="0 0 20 20"><rect class="fl" x="2" y="2" width="16" height="16" rx="2"/><path d="M4 15l4-7 3 5 2-2 3 4z" fill="#333"/><circle cx="12.500" cy="6" r="1.800" fill="#333"/></svg></button>
  <button aria-label="Text"><svg viewBox="0 0 20 20"><path class="fl" d="M4 3h12v4h-1.500V5.500H11.500V17h-3V5.500H5.500V7H4z"/></svg></button>
  <button aria-label="Text box"><svg viewBox="0 0 20 20"><rect x="3.500" y="4.500" width="13" height="11" fill="#8a8a8a" stroke="#ded3dd" stroke-width="1.400"/><path class="sl thin" d="M5.500 8h9M5.500 10.500h9M5.500 13h5"/></svg></button>
  <button aria-label="Table"><svg viewBox="0 0 20 20"><path d="M1.500 2.500h17v15h-17z" fill="#555"/><path class="sl thin" d="M1.500 2.500h17v15h-17zM1.500 6.500h17M1.500 10h17M1.500 13.500h17M6 2.500v15M10 2.500v15M14.500 2.500v15"/></svg></button>
  <button class="more" aria-label="Dimension"><svg viewBox="0 0 20 20"><path class="sb w2" d="M4 4h8M9 15h6"/><circle class="fb" cx="3.500" cy="4" r="2"/><circle class="fb" cx="9" cy="15" r="2"/><path class="sl" stroke-dasharray="2 1" d="M10 4h6v12"/></svg></button>
  <button aria-label="Barcode"><svg viewBox="0 0 20 20"><path class="sl" d="M3.500 3v14M6.500 3v14M9 3v14M12.500 3v14M16 3v14"/></svg></button>
  <button aria-label="Delete"><svg viewBox="0 0 20 20"><path class="fl" d="M3 1l9 8-4 .4 2.500 5-2 1-2.500-5L3 13z"/><circle class="fr" cx="13.500" cy="13" r="4.500"/><path d="M11.500 11l4 4M15.500 11l-4 4" stroke="#fff" stroke-width="1.300"/></svg></button>
  <i class="sep"></i>
  <button class="more" aria-label="Grid origin"><svg viewBox="0 0 20 20"><path class="dots" d="M3 2.500h15M3 6.500h15M3 11h15M3 15h15M3 18h10"/><path class="sb" d="M8 7v8M4 11h8"/></svg></button>
  <button aria-label="Drill origin"><svg viewBox="0 0 20 20"><path class="sl w2" d="M3 3l14 14M17 3L3 17"/><circle class="sb w2" cx="10" cy="10" r="5"/></svg></button>
  <button aria-label="Measure"><svg viewBox="0 0 20 20"><path class="sl w2" d="M3 14L14 3l3 3L6 17z"/><path class="sl" d="M6 12l1.500 1.500M9 9l1.500 1.500M12 6l1.500 1.500"/></svg></button>
</div>

<aside class="appearance">
  <h2 class="head">Appearance</h2>
  <div class="tabs" role="tablist"><button role="tab" aria-selected="true" class="active">Layers</button><button role="tab">Objects</button><button role="tab">Nets</button></div>
  <div class="layer-box">
  <svg class="defs"><symbol id="eye" viewBox="0 0 10 8"><path d="M0 4Q5-2.500 10 4Q5 10.500 0 4z" fill="#ded3dd"/><circle cx="5" cy="4" r="2" fill="#ded3dd" stroke="#3a3a3a"/></symbol></svg>
  <ul class="layers">
    <li class="current"><i class="c1"></i><button aria-label="Toggle F.Cu"><svg><use href="#eye"/></svg></button>F.Cu</li>
    <li><i class="c2"></i><button aria-label="Toggle In1.Cu"><svg><use href="#eye"/></svg></button>In1.Cu</li>
    <li><i class="c3"></i><button aria-label="Toggle In2.Cu"><svg><use href="#eye"/></svg></button>In2.Cu</li>
    <li><i class="c4"></i><button aria-label="Toggle B.Cu"><svg><use href="#eye"/></svg></button>B.Cu</li>
    <li><i class="c5"></i><button aria-label="Toggle F.Adhesive"><svg><use href="#eye"/></svg></button>F.Adhesive</li>
    <li><i class="c6"></i><button aria-label="Toggle B.Adhesive"><svg><use href="#eye"/></svg></button>B.Adhesive</li>
    <li><i class="c7"></i><button aria-label="Toggle F.Paste"><svg><use href="#eye"/></svg></button>F.Paste</li>
    <li><i class="c8"></i><button aria-label="Toggle B.Paste"><svg><use href="#eye"/></svg></button>B.Paste</li>
    <li><i class="c9"></i><button aria-label="Toggle F.Silkscreen"><svg><use href="#eye"/></svg></button>F.Silkscreen</li>
    <li><i class="c10"></i><button aria-label="Toggle B.Silkscreen"><svg><use href="#eye"/></svg></button>B.Silkscreen</li>
    <li><i class="c11"></i><button aria-label="Toggle F.Mask"><svg><use href="#eye"/></svg></button>F.Mask</li>
    <li><i class="c12"></i><button aria-label="Toggle B.Mask"><svg><use href="#eye"/></svg></button>B.Mask</li>
    <li><i class="c13"></i><button aria-label="Toggle User.Drawings"><svg><use href="#eye"/></svg></button>User.Drawings</li>
    <li><i class="c14"></i><button aria-label="Toggle User.Comments"><svg><use href="#eye"/></svg></button>User.Comments</li>
    <li><i class="c15"></i><button aria-label="Toggle User.Eco1"><svg><use href="#eye"/></svg></button>User.Eco1</li>
    <li><i class="c16"></i><button aria-label="Toggle User.Eco2"><svg><use href="#eye"/></svg></button>User.Eco2</li>
    <li><i class="c17"></i><button aria-label="Toggle Edge.Cuts"><svg><use href="#eye"/></svg></button>Edge.Cuts</li>
    <li><i class="c18"></i><button aria-label="Toggle Margin"><svg><use href="#eye"/></svg></button>Margin</li>
    <li><i class="c18"></i><button aria-label="Toggle F.Courtyard"><svg><use href="#eye"/></svg></button>F.Courtyard</li>
    <li><i class="c20"></i><button aria-label="Toggle B.Courtyard"><svg><use href="#eye"/></svg></button>B.Courtyard</li>
    <li><i class="c21"></i><button aria-label="Toggle F.Fab"><svg><use href="#eye"/></svg></button>F.Fab</li>
    <li><i class="c22"></i><button aria-label="Toggle B.Fab"><svg><use href="#eye"/></svg></button>B.Fab</li>
    <li><i class="c13"></i><button aria-label="Toggle User.1"><svg><use href="#eye"/></svg></button>User.1</li>
    <li><i class="c14"></i><button aria-label="Toggle User.2"><svg><use href="#eye"/></svg></button>User.2</li>
    <li><i class="c15"></i><button aria-label="Toggle User.3"><svg><use href="#eye"/></svg></button>User.3</li>
    <li><i class="c16"></i><button aria-label="Toggle User.4"><svg><use href="#eye"/></svg></button>User.4</li>
  </ul>
  </div>
  <button class="disclosure">Layer Display Options</button>
  <div class="field"><label for="presets">Presets (Ctrl+Tab):</label><span class="combo"><select id="presets"><option>---</option></select></span></div>
  <div class="field"><label for="viewports">Viewports (Shift+Tab):</label><span class="combo boxed muted"><select id="viewports"><option>---</option></select></span></div>
  <h2 class="head filter-head">Selection Filter</h2>
  <div class="filter">
    <label class="check"><input type="checkbox" checked>All items</label><label class="check"><input type="checkbox">Locked items</label>
    <label class="check"><input type="checkbox" checked>Footprints</label><label class="check"><input type="checkbox" checked>Text</label>
    <label class="check"><input type="checkbox" checked>Tracks</label><label class="check"><input type="checkbox" checked>Vias</label>
    <label class="check"><input type="checkbox" checked>Pads</label><label class="check"><input type="checkbox" checked>Graphics</label>
    <label class="check"><input type="checkbox" checked>Zones</label><label class="check"><input type="checkbox" checked>Rule Areas</label>
    <label class="check"><input type="checkbox" checked>Dimensions</label><label class="check"><input type="checkbox" checked>Other items</label>
    <label class="check"><input type="checkbox" checked>Points</label>
  </div>
</aside>
</main>

<dl class="stats">
  <div><dt>Pads</dt><dd>461</dd></div><div><dt>Vias</dt><dd>0</dd></div><div><dt>Track Segments</dt><dd>0</dd></div><div><dt>Nets</dt><dd>82</dd></div><div><dt>Unrouted</dt><dd>271</dd></div>
</dl>
</div>
<footer class="status">
  <span>Z 5.36</span><span>X 0.0000&nbsp; Y 0.0000</span><span>dx 0.0000&nbsp; dy 0.0000&nbsp; dist 0.0000</span><span>grid 0.5000</span><span>mm</span>
  <button class="badge" aria-label="Notifications">99+</button>
</footer>
</body>
</html>
```
FILE: styles.css
```css
* { box-sizing: border-box; }
body {
  margin: 0;
  height: 100vh;
  display: flex;
  flex-direction: column;
  background: #000;
  color: #e4e4e4;
  font: 9px/12px Lato, "Open Sans", sans-serif;
  overflow: hidden;
}
button, select, input { font: inherit; color: inherit; }
button { background: none; border: 0; padding: 0; }
h1, h2, p, ul, dl, dd { margin: 0; padding: 0; font: inherit; }

.titlebar { flex: none; height: 22px; display: flex; align-items: center; gap: 4px; padding: 1px 7px 0 10px; background: #1f1f1f; color: #8c8c8c; }
.titlebar h1 { font-size: 9px; }
.app-icon { width: 12px; height: 12px; }
.win-buttons { margin-left: auto; display: flex; }
.win-buttons button { width: 33px; height: 20px; display: grid; place-items: center; }
.win-buttons svg { width: 8px; height: 8px; fill: none; stroke: #999; }

.frame { flex: 1; min-height: 0; display: flex; flex-direction: column; margin: 0 6px 0 5px; background: #333; }
.menubar { flex: none; height: 14px; display: flex; gap: 9px; padding-left: 5px; background: #2b2b2b; }
.menubar button { color: #f0f0f0; }

.toolbar { flex: none; display: flex; align-items: center; }
.toolbar button, .vtools button { flex: none; width: 23px; height: 23px; display: grid; place-items: center; position: relative; }
.toolbar button svg, .vtools button svg { width: 20px; height: 20px; }
.main-tools { height: 24px; width: 856px; padding: 0 1px 0 3px; justify-content: space-between; }
.options { height: 25px; padding-left: 3px; gap: 1px; }
.toolbar .sep { flex: none; width: 1px; height: 16px; margin: 0 3px; background: #4c4c4c; }
.options .sep { margin: 0 2px; }
.toolbar button.on, .vtools button.on { background: #06203f; border: 1px solid #17427c; }
.dim svg { opacity: .5; }

svg .sl { stroke: #ded3dd; fill: none; stroke-width: 1.4; }
svg .sb { stroke: #42b8eb; fill: none; stroke-width: 1.4; }
svg .sr { stroke: #f2647e; fill: none; stroke-width: 1.4; }
svg .w2 { stroke-width: 2; }
svg .w3 { stroke-width: 3; }
svg .thin { stroke-width: 1; }
svg .fl { fill: #ded3dd; }
svg .fb { fill: #42b8eb; }
svg .fr { fill: #f2647e; }
svg .fo { fill: #f29100; }
svg .fd { fill: #5a5a5a; }
svg .dots { stroke: #ded3dd; stroke-width: 2; stroke-dasharray: 2 2.3; fill: none; }
.net { font: bold 6px "Liberation Sans", sans-serif; fill: #fff; }

.combo { position: relative; display: flex; align-items: center; height: 15px; background: #2f2f2f; border: 1px solid #484848; }
.combo select { appearance: none; flex: 1; min-width: 0; height: 13px; padding: 0 8px 0 1px; border: 0; background: transparent; }
.combo::after { content: ""; position: absolute; right: 5px; top: 3px; width: 4px; height: 4px; border: solid #9a9a9a; border-width: 0 1px 1px 0; transform: rotate(45deg); pointer-events: none; }
.combo.lined { border-color: #777 transparent; }
.combo.boxed { border-color: #858585; }
.combo.muted { color: #8a8a8a; }
.c-default { width: 62px; }
.c-track { width: 112px; }
.c-via { width: 108px; }
.c-layer { width: 86px; background: #1f1f1f; }
.c-layer select { padding-left: 4px; }
.c-grid { width: 122px; }
.c-zoom { width: 69px; }
.chip { width: 9px; height: 9px; margin-left: 3px; background: #c83434; }

.check { display: flex; align-items: center; gap: 2px; }
.check input { appearance: none; flex: none; width: 10px; height: 10px; margin: 0; border: 1px solid #8a8a8a; border-radius: 2px; background: #222; display: grid; place-items: center; }
.check input:checked { background: #55c3f7; border-color: #55c3f7; }
.check input:checked::after { content: ""; width: 5px; height: 3px; border: solid #14405a; border-width: 0 0 1px 1px; transform: rotate(-45deg); margin-bottom: 2px; }

.work { flex: 1; min-height: 0; display: grid; grid-template-columns: 219px 28px minmax(0, 1fr) 28px 145px; grid-template-rows: minmax(0, 1fr); }
.properties { display: flex; flex-direction: column; background: #202020; border-right: 1px solid #161616; }
.prop-head { display: flex; justify-content: space-between; align-items: center; height: 17px; padding: 0 3px 0 2px; }
.prop-head svg { width: 7px; height: 7px; display: block; stroke: #eee; fill: none; }
.properties p { padding: 1px 2px 2px; }
.prop-grid { flex: 1; border-top: 1px solid #3a3a3a; }

.vtools { display: flex; flex-direction: column; align-items: center; justify-content: space-between; background: #333; }
.vtools .sep { width: 16px; height: 1px; margin: 3px 0; background: #555; }
.vtools.left { height: 441px; padding: 3px 0 2px 1px; }
.vtools.right { height: 585px; padding: 4px 2px 2px 0; }
.vtools .more::after { content: ""; position: absolute; right: 0; bottom: 0; border: 2px solid; border-color: transparent #e8e8e8 #e8e8e8 transparent; }

.canvas { background: #000f20; min-width: 0; }
.canvas svg { display: block; width: 100%; height: 100%; }
.canvas text { font-family: "Noto Sans", sans-serif; text-anchor: middle; fill: #e8d8da; }
.canvas .ref { fill: #b9bec2; }
.p6 { font-size: 5px; } .p7 { font-size: 7px; } .p8 { font-size: 8px; } .p9 { font-size: 9px; }
.p10 { font-size: 11px; } .p12 { font-size: 12px; } .p14 { font-size: 14px; } .p15 { font-size: 15px; } .p17 { font-size: 17px; }
.rats { fill: none; stroke: #1f8a90; stroke-width: .7; stroke-dasharray: 3 1; opacity: .75; }

.appearance { display: flex; flex-direction: column; min-height: 0; background: #222; padding-left: 1px; }
.head { flex: none; height: 16px; padding: 3px 1px 1px; background: #2b2b2b; }
.tabs { flex: none; display: flex; height: 19px; padding-top: 4px; align-items: stretch; }
.tabs button { width: 38px; text-align: left; padding: 0 2px; background: #000; border-right: 1px solid #444; }
.tabs button.active { width: 37px; background: #222; border: 0; }
.layer-box { flex: 1; min-height: 0; margin: 0 3px 0 2px; background: #343434; overflow: hidden; }
.defs { position: absolute; width: 0; height: 0; }
.layers { list-style: none; display: grid; grid-auto-rows: 1fr; height: 322px; margin-top: 1px; }
.layers li { display: flex; align-items: center; gap: 3px; padding-left: 9px; white-space: nowrap; position: relative; color: #d4d4d4; }
.layers li.current { background: #454545; }
.layers li.current::before { content: ""; position: absolute; left: 3px; border: 3px solid transparent; border-left: 4px solid #3a3af0; border-right: 0; }
.layers i { width: 10px; height: 9px; }
.layers button { width: 10px; height: 8px; }
.layers button svg { display: block; width: 10px; height: 8px; }
.c1 { background: #c83434; } .c2 { background: #7fc87f; } .c3 { background: #ce7d2c; } .c4 { background: #4d7fc4; }
.c5 { background: #840084; } .c6 { background: #000084; } .c7 { background: #a39690; } .c8 { background: #00b0b0; }
.c9 { background: #f2eda1; } .c10 { background: #e8b2a7; }
.c11 { background: repeating-conic-gradient(#6a3270 0 25%, #4f2a58 0 50%) 0 0 / 6px 6px; }
.c12 { background: repeating-conic-gradient(#0e7468 0 25%, #0a5850 0 50%) 0 0 / 6px 6px; }
.c13 { background: #c2c2c2; } .c14 { background: #5994dc; } .c15 { background: #b4dbd2; } .c16 { background: #d8c852; }
.c17 { background: #d0d2cd; } .c18 { background: #ff26e2; } .c20 { background: #26e9ff; } .c21 { background: #afafaf; } .c22 { background: #585d84; }
.disclosure { flex: none; height: 16px; padding-left: 8px; text-align: left; display: flex; align-items: center; gap: 2px; }
.disclosure::before { content: ""; border: 3px solid transparent; border-left: 4px solid #eee; border-right: 0; }
.field { flex: none; margin: 6px 2px 0; color: #d4d4d4; }
.field + .field { margin-top: 2px; }
.field .combo { margin-top: 1px; height: 14px; border-color: #5c5c5c; background: #333; }
.disclosure + .field { margin-top: 7px; }
.filter-head { margin-top: 4px; }
.filter { flex: none; display: grid; grid-template-columns: 59px 1fr; grid-auto-rows: 1fr; height: 82px; margin: 0 0 2px 1px; }
.filter .check { gap: 1px; }

.stats { flex: none; display: flex; height: 23px; padding: 1px 0 0 7px; color: #d4d4d4; }
.stats div { margin-right: 23px; }
.stats dt { height: 12px; }
.stats dd { height: 10px; line-height: 10px; }
.status { flex: none; height: 20px; display: grid; grid-template-columns: 171px 171px 170px 171px 1fr auto; align-items: center; padding: 0 6px 2px 177px; color: #d4d4d4; }
.badge { background: #d00d0d; color: #fff; font-weight: bold; font-size: 8px; line-height: 10px; padding: 0 1px; border-radius: 2px; }
```
